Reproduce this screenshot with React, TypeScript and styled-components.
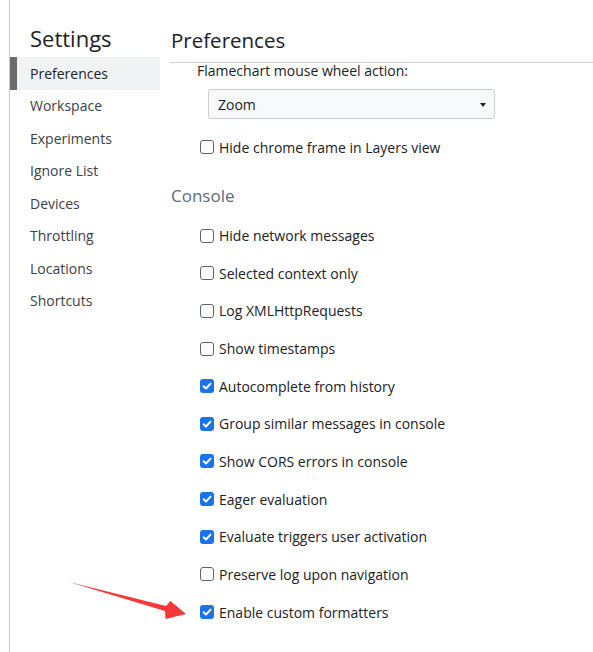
import React from "react";
import styled, { createGlobalStyle } from "styled-components";

const GlobalStyle = createGlobalStyle`
  html, body {
    margin: 0;
    padding: 0;
    background: #ffffff;
  }
  body {
    font-family: "Segoe UI", "Open Sans", "Noto Sans", sans-serif;
    overflow: hidden;
  }
`;

const Page = styled.div`
  position: relative;
  display: flex;
  width: 593px;
  height: 652px;
  overflow: hidden;
  box-sizing: border-box;
`;

const Gutter = styled.div`
  width: 9px;
  flex: none;
  border-right: 1px solid #c4c7cb;
`;

const Sidebar = styled.nav`
  width: 150px;
  flex: none;
  display: flex;
  flex-direction: column;
`;

const SidebarTitle = styled.h1`
  margin: 0;
  height: 57px;
  box-sizing: border-box;
  padding: 22px 0 0 20px;
  font-size: 22px;
  line-height: 32px;
  font-weight: 400;
  color: #202124;
`;

const Tab = styled.div<{ $active?: boolean }>`
  height: 32.5px;
  display: flex;
  align-items: center;
  padding-left: 13px;
  font-size: 14px;
  color: ${(p) => (p.$active ? "#202124" : "#3c4043")};
  background: ${(p) => (p.$active ? "#f1f3f4" : "transparent")};
  border-left: 7px solid ${(p) => (p.$active ? "#6b6b6b" : "transparent")};
`;

const Main = styled.main`
  flex: 1;
  display: flex;
  flex-direction: column;
  padding-left: 10px;
  min-width: 0;
`;

const Header = styled.header`
  height: 63px;
  box-sizing: border-box;
  padding: 24px 0 0 1px;
  border-bottom: 1px solid #d0d3d6;
  font-size: 20.5px;
  line-height: 32px;
  color: #202124;
`;

const Content = styled.div`
  display: flex;
  flex-direction: column;
`;

const FieldLabel = styled.div`
  padding-left: 27px;
  font-size: 14px;
  line-height: 16px;
  color: #202124;
`;

const SelectBox = styled.div`
  margin: 10px 0 0 38px;
  width: 287px;
  height: 30px;
  box-sizing: border-box;
  border: 1px solid #cbcdd1;
  border-radius: 3px;
  background: #f8f9fa;
  display: flex;
  align-items: center;
  justify-content: space-between;
  padding: 1px 8px 0 9px;
  font-size: 14px;
  color: #202124;
`;

const Caret = styled.span`
  width: 0;
  height: 0;
  border-left: 3.5px solid transparent;
  border-right: 3.5px solid transparent;
  border-top: 4px solid #202124;
`;

const SectionTitle = styled.h2`
  margin: 15px 0 6px 1px;
  font-size: 17px;
  line-height: 30px;
  font-weight: 400;
  color: #626a78;
`;

const Row = styled.label<{ $first?: boolean }>`
  height: 37.65px;
  display: flex;
  align-items: center;
  gap: 5px;
  padding-left: 30px;
  margin-top: ${(p) => (p.$first ? "9.2px" : "0")};
  font-size: 14px;
  color: #202124;
`;

const Box = styled.span<{ $checked?: boolean }>`
  width: 14px;
  height: 14px;
  box-sizing: border-box;
  flex: none;
  border-radius: 3px;
  border: ${(p) => (p.$checked ? "none" : "1px solid #5f6368")};
  background: ${(p) => (p.$checked ? "#1a73e8" : "#ffffff")};
  display: flex;
  align-items: center;
  justify-content: center;
`;

const ArrowLayer = styled.svg`
  position: absolute;
  left: 0;
  top: 0;
  pointer-events: none;
`;

const Check = () => (
  <svg width="10" height="10" viewBox="0 0 10 10">
    <path d="M1.6 5.2 L4 7.5 L8.5 2.6" fill="none" stroke="#fff" strokeWidth="1.9" strokeLinecap="round" strokeLinejoin="round" />
  </svg>
);

const CheckRow = ({ label, checked, first }: { label: string; checked?: boolean; first?: boolean }) => (
  <Row $first={first}>
    <Box $checked={checked}>{checked && <Check />}</Box>
    {label}
  </Row>
);

const tabs = ["Preferences", "Workspace", "Experiments", "Ignore List", "Devices", "Throttling", "Locations", "Shortcuts"];

const consoleItems: [string, boolean][] = [
  ["Hide network messages", false],
  ["Selected context only", false],
  ["Log XMLHttpRequests", false],
  ["Show timestamps", false],
  ["Autocomplete from history", true],
  ["Group similar messages in console", true],
  ["Show CORS errors in console", true],
  ["Eager evaluation", true],
  ["Evaluate triggers user activation", true],
  ["Preserve log upon navigation", false],
  ["Enable custom formatters", true],
];

export default function App() {
  return (
    <>
      <GlobalStyle />
      <Page>
        <Gutter />
        <Sidebar>
          <SidebarTitle>Settings</SidebarTitle>
          {tabs.map((t, i) => (
            <Tab key={t} $active={i === 0}>
              {t}
            </Tab>
          ))}
        </Sidebar>
        <Main>
          <Header>Preferences</Header>
          <Content>
            <FieldLabel>Flamechart mouse wheel action:</FieldLabel>
            <SelectBox>
              Zoom
              <Caret />
            </SelectBox>
            <CheckRow label="Hide chrome frame in Layers view" first />
            <SectionTitle>Console</SectionTitle>
            {consoleItems.map(([l, c]) => (
              <CheckRow key={l} label={l} checked={c} />
            ))}
          </Content>
        </Main>
        <ArrowLayer width="593" height="652" viewBox="0 0 593 652">
          <polygon
            points="69,582 166,606 170.5,601 186,614 165.5,619 165,611"
            fill="#f53838"
          />
        </ArrowLayer>
      </Page>
    </>
  );
}
